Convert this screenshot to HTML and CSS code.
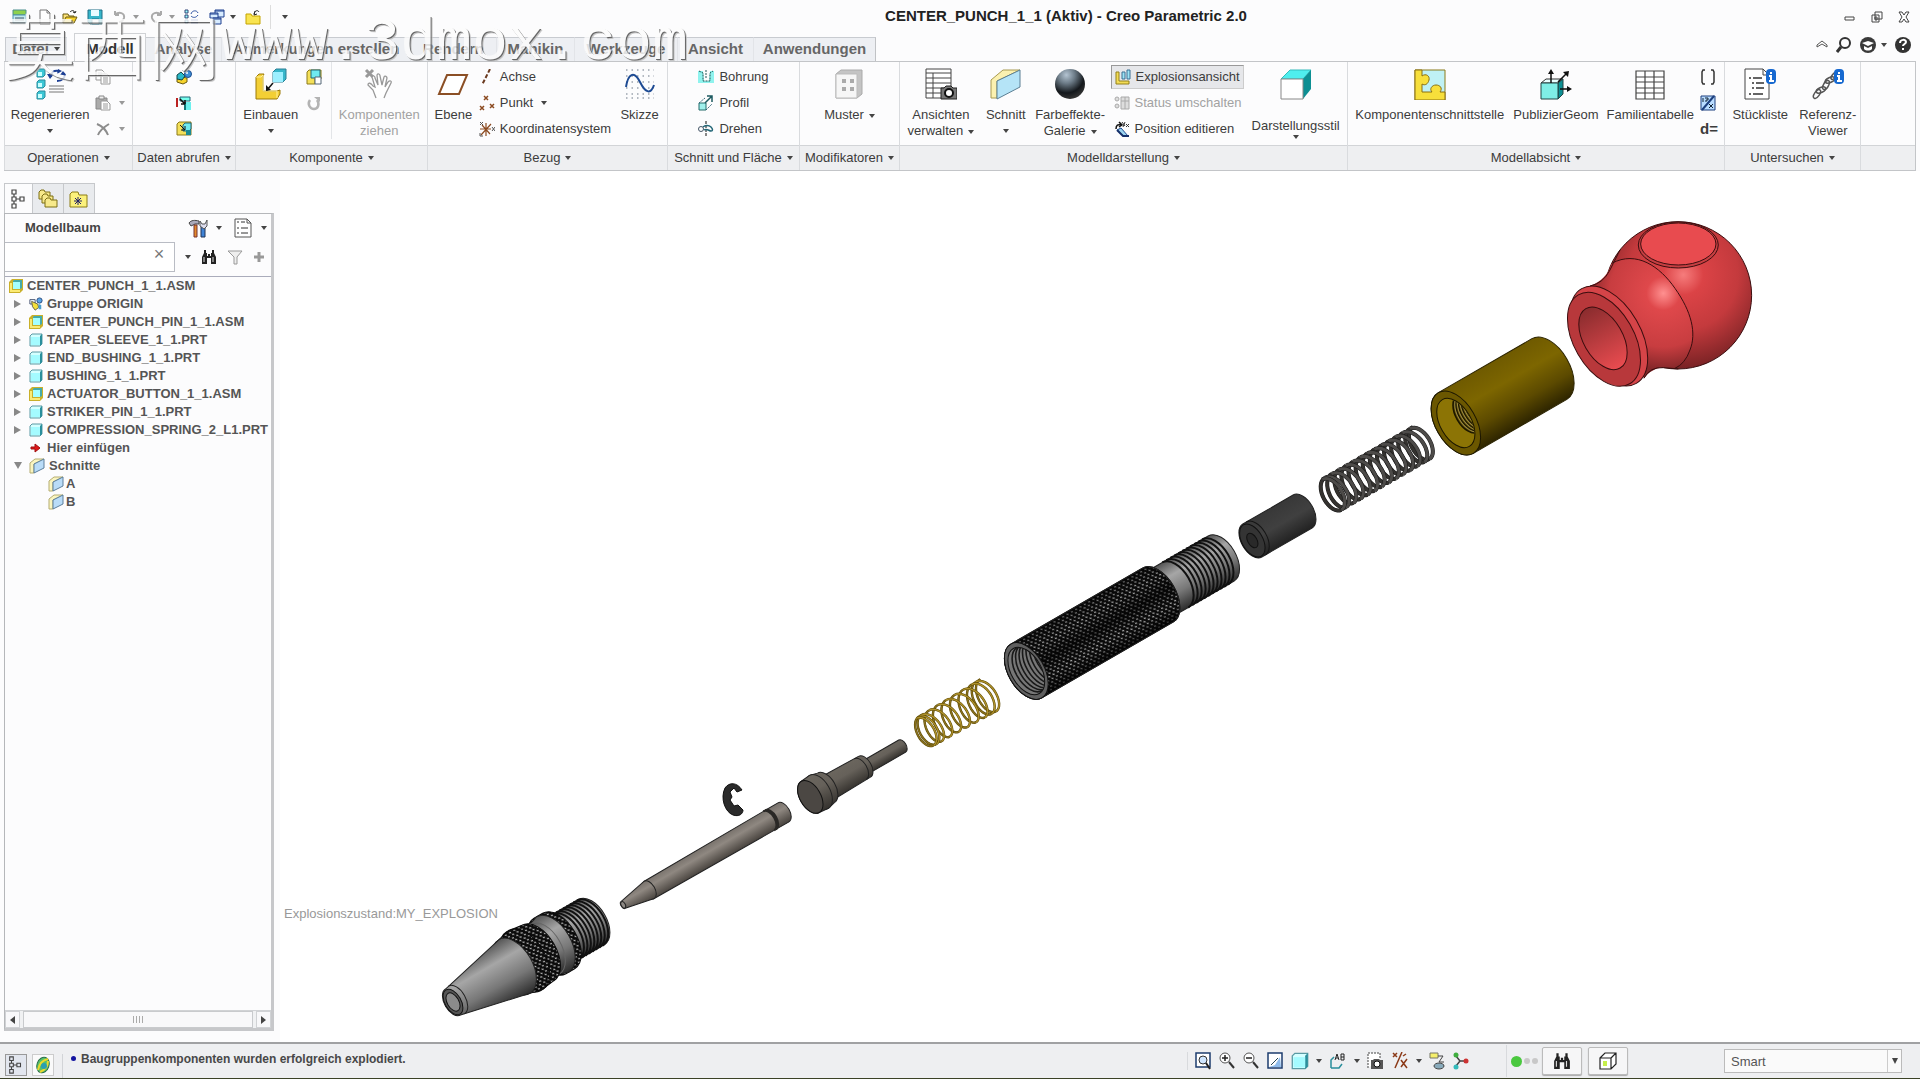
FILE: index.html
```html
<!DOCTYPE html>
<html lang="de">
<head>
<meta charset="utf-8">
<meta name="viewport" content="width=device-width, initial-scale=1">
<title>CENTER_PUNCH_1_1 (Aktiv) - Creo Parametric 2.0</title>
<link rel="stylesheet" href="styles.css">
</head>
<body>
<svg class="sprite" aria-hidden="true">
  <defs>
    <radialGradient id="ball" cx=".38" cy=".2" r=".8"><stop offset="0" stop-color="#b4c4d2"/><stop offset=".35" stop-color="#6d7c88"/><stop offset=".75" stop-color="#14181c"/><stop offset="1" stop-color="#333"/></radialGradient>
  </defs>
  <symbol id="new" viewBox="0 0 16 16"><path d="M1 1h13v5H1z" fill="#8ed14c" stroke="#4b8f8c"/><path d="M1 6h13v8H1z" fill="#bfe9ef" stroke="#4b8fb0"/><path d="M3 9h9M3 11h9" stroke="#456"/></symbol>
  <symbol id="doc" viewBox="0 0 16 16"><path d="M3 1h7l3 3v11H3zM10 1v3h3" fill="#fff" stroke="#777"/></symbol>
  <symbol id="open" viewBox="0 0 16 16"><path d="M1 14V5h5l1 2h5v2" fill="#fbe27a" stroke="#6b5a10"/><path d="M1 14l3-6h11l-3 6z" fill="#f3cf2c" stroke="#6b5a10"/><path d="M8 3c2-2 4-2 5 1m0 0l-2-1m2 1l1-2" fill="none" stroke="#222"/></symbol>
  <symbol id="save" viewBox="0 0 16 16"><path d="M1 1h14v14H3l-2-2z" fill="#36b5c9" stroke="#1f6f86"/><path d="M4 1h8v6H4z" fill="#e8fbff"/><path d="M5 10h7v5H5z" fill="#fff" stroke="#1f6f86"/></symbol>
  <symbol id="undo" viewBox="0 0 16 16"><path d="M3 6c4-4 10-2 9 3-1 3-3 4-5 4M3 6V2m0 4h4" fill="none" stroke="#aaa" stroke-width="2"/></symbol>
  <symbol id="redo" viewBox="0 0 16 16"><path d="M13 6C9 2 3 4 4 9c1 3 3 4 5 4M13 6V2m0 4H9" fill="none" stroke="#aaa" stroke-width="2"/></symbol>
  <symbol id="regen" viewBox="0 0 16 16"><path d="M1 1h3v3H1zM1 6h3v3H1zM1 11h3v3H1z" fill="#9ff" stroke="#347"/><path d="M7 5c1-4 6-4 7-1M14 6c-2 3-5 3-7 1M7 11h7M7 14h7" fill="none" stroke="#2a4fa0"/></symbol>
  <symbol id="wins" viewBox="0 0 16 16"><g fill="#d8ecff" stroke="#1c3f8f"><path d="M6 1h9v7H6z"/><path d="M1 4h8v5H1z"/><path d="M4 9h8v6H4z"/></g><path d="M6 2h9M1 5h8M4 10h8" stroke="#1c3f8f"/></symbol>
  <symbol id="folder" viewBox="0 0 16 16"><path d="M1 15V5h5l1 2h8v8z" fill="#f9e450" stroke="#c4a300"/><path d="M9 5c1-4 4-4 5-2m-4-1l-1 4 3-1" fill="none" stroke="#222"/></symbol>
  <symbol id="regenL" viewBox="0 0 32 32"><g fill="#3cc7d6" stroke="#2a8c9c"><path d="M3 3l2-2h6v6l-2 2H3z"/><path d="M3 14l2-2h6v6l-2 2H3z"/><path d="M3 25l2-2h6v6l-2 2H3z"/></g><path d="M4 4h4v4H4zM4 15h4v4H4zM4 26h4v4H4z" fill="#c8ffff"/><path d="M17 9c0-5 3-7 8-6M30 5c2 5-2 8-7 8" fill="none" stroke="#1d3f94" stroke-width="2"/><path d="M13 6h7l-4 5zM24 1l-1 5 5-3zM26 7h6l-3-4z" fill="#1d3f94"/><path d="M15 18h15M15 21h15M15 24h15" stroke="#777"/></symbol>
  <symbol id="copy" viewBox="0 0 16 16"><g fill="#fff" stroke="#999"><path d="M1 1h6l3 3v7H1z"/><path d="M6 5h6l3 3v7H6z"/></g><path d="M3 4h4M3 6h3M8 9h5M8 11h5M8 13h5" stroke="#999"/></symbol>
  <symbol id="paste" viewBox="0 0 16 16"><path d="M1 3h11v11H1z" fill="#aaa" stroke="#888"/><path d="M4 1h5v3H4z" fill="#eee" stroke="#888"/><path d="M6 6h6l3 3v6H6z" fill="#fff" stroke="#999"/><path d="M8 9h5M8 11h5M8 13h5" stroke="#999"/></symbol>
  <symbol id="del" viewBox="0 0 16 16"><path d="M2 3c5 2 9 6 11 11M14 3C9 6 5 9 3 14" fill="none" stroke="#8c8c8c" stroke-width="2"/></symbol>
  <symbol id="udf" viewBox="0 0 16 16"><path d="M1 10l5-2 5 1v4l-4 2-6-2z" fill="#f5d22b" stroke="#6b5a10"/><path d="M1 6l4-3 4 4-3 4-5-1z" fill="#2bb9c9" stroke="#144"/><circle cx="12" cy="5" r="3.500" fill="#3e8fd6" stroke="#1c4b8c"/><circle cx="11" cy="4" r="1" fill="#fff"/></symbol>
  <symbol id="copygeo" viewBox="0 0 16 16"><path d="M4 2h10v4H4z" fill="#7fe" stroke="#267"/><path d="M1 3v9" stroke="#b22" stroke-width="2"/><path d="M9 7h6v8H9z" fill="#6cf1ee"/><path d="M9 7v8" stroke="#177" stroke-width="2"/><path d="M4 4l5 5m0 0V5m0 4H5" stroke="#111" stroke-width="1.500" fill="none"/></symbol>
  <symbol id="shrink" viewBox="0 0 16 16"><path d="M1 3l2-2h12v13H1z" fill="#f4e05a" stroke="#8c7a18"/><path d="M7 4l2-2h6v6l-2 2H7z" fill="#6feaf0" stroke="#267"/><path d="M10 9h5v5h-5z" fill="#1b8a94"/><path d="M4 4l5 5m0 0V5m0 4H5" stroke="#111" fill="none"/></symbol>
  <symbol id="assemble" viewBox="0 0 32 32"><path d="M1 9l3-3h5l-1 2v15h14l3-1v4l-3 5H1z" fill="#f3cf35" stroke="#9c7a08"/><path d="M1 9h5l2-2v16h14v7" fill="none" stroke="#fff09a"/><path d="M18 4l3-3h10v10l-3 3H18z" fill="#36b7cb" stroke="#2a7f94"/><path d="M18 4h10v10H18z" fill="#9defff"/><path d="M18 15l-6 7" stroke="#111" stroke-width="1.500"/><path d="M11 23v-6l5 5z" fill="#111"/></symbol>
  <symbol id="create" viewBox="0 0 16 16"><path d="M1 3l2-2h12v9H9v5H1z" fill="#f4e05a" stroke="#8c7a18"/><path d="M5 1h9v8H5z" fill="#6feaf0" stroke="#267"/><path d="M9 8h6v7H9z" fill="#fff" stroke="#567"/></symbol>
  <symbol id="repeat" viewBox="0 0 16 16"><path d="M4 5c-3 4 0 9 4 9s6-5 3-9" fill="none" stroke="#b3b3b3" stroke-width="2.500"/><path d="M8 2h6v5z" fill="#b3b3b3"/></symbol>
  <symbol id="drag" viewBox="0 0 32 32"><path d="M3 2l7 7M10 2L3 9" stroke="#999" stroke-width="3"/><path d="M13 30l-3-8-5-5c0-3 3-2 5 1l2 1-3-10c1-2 3-1 3 1l3 7-1-10c1-2 3-1 3 1l2 9 2-8c1-2 3 0 3 1l-2 9 3-5c2-2 4-1 3 1l-5 10-2 5" fill="#fff" stroke="#999" stroke-width="1.300"/></symbol>
  <symbol id="plane" viewBox="0 0 32 32"><path d="M10 7h20L22 26H2z" fill="#fff" stroke="#8b4f25" stroke-width="2"/></symbol>
  <symbol id="axis" viewBox="0 0 16 16"><path d="M11 0L3 16" stroke="#6b3a20" stroke-width="2" stroke-dasharray="4 2"/></symbol>
  <symbol id="point" viewBox="0 0 16 16"><path d="M5 1l4 4M9 1L5 5M1 11l4 4M5 11l-4 4M11 9l4 4M15 9l-4 4" stroke="#8b4a20" stroke-width="1.500"/></symbol>
  <symbol id="csys" viewBox="0 0 16 16"><path d="M1 8h11M7 2v13M2 14L12 3M3 4l8 9" stroke="#8b4a20" stroke-width="1.200"/><path d="M1 1l3 3M4 1L1 4M13 6l3 4M16 6l-3 4M1 12v3h3" stroke="#555" fill="none"/></symbol>
  <symbol id="sketch" viewBox="0 0 32 32"><path d="M2 2h28M2 8h28M2 14h28M2 20h28M2 26h28M2 30h28" stroke="#9aa3ad" stroke-width="1.500" stroke-dasharray="1.500 4"/><path d="M2 19C4 6 10 2 16 14s11 12 14 3" fill="none" stroke="#1d4a93" stroke-width="2"/></symbol>
  <symbol id="hole" viewBox="0 0 16 16"><path d="M0 2h5l1 10h5l1-10h4v12H0z" fill="#8ff3ee"/><path d="M1 2l4 2v8h7V4l3-2M8 1v9" stroke="#255" stroke-dasharray="2 1" fill="none"/></symbol>
  <symbol id="extrude" viewBox="0 0 16 16"><path d="M1 8h7v7H1z" fill="#9ff0ec" stroke="#256b6b"/><path d="M1 8l6-5M8 15l6-6" stroke="#367" stroke-dasharray="2 1"/><path d="M7 8l7-7M9 1h5v6" fill="none" stroke="#1d5a60" stroke-width="1.500"/></symbol>
  <symbol id="revolve" viewBox="0 0 16 16"><path d="M8 0v16" stroke="#111" stroke-dasharray="3 1"/><circle cx="3" cy="8" r="2.500" fill="none" stroke="#456"/><path d="M5 6c2-2 6-2 8 0s2 4 0 4-4-3-7-1" fill="none" stroke="#267" stroke-width="1.500"/></symbol>
  <symbol id="pattern" viewBox="0 0 32 32"><path d="M3 6l5-4h21v24l-5 4H3z" fill="#c4c4c4" stroke="#aaa"/><path d="M3 6h21v24H3z" fill="#f6f6f6" stroke="#bbb"/><path d="M9 13h4M17 13h4M9 21h4M17 21h4" stroke="#aaa" stroke-width="4"/></symbol>
  <symbol id="views" viewBox="0 0 32 32"><path d="M1 1h25v29H1zM1 5h25M8 5v25M1 10h25M1 15h25M1 20h25M1 25h25" fill="#fff" stroke="#444"/><path d="M16 20h3l2-2h5l2 2h4v11H16z" fill="#777" stroke="#222"/><circle cx="24" cy="25" r="4" fill="#fff" stroke="#111" stroke-width="2"/></symbol>
  <symbol id="section" viewBox="0 0 32 32"><path d="M1 12L13 2h17L7 13v17H1z" fill="#fbf1b0" stroke="#a89a50"/><path d="M7 13L30 2v17L7 31z" fill="#b5e4f7" stroke="#5b7f94"/></symbol>
  <symbol id="sphere" viewBox="0 0 32 32"><circle cx="16" cy="16" r="15" fill="url(#ball)"/></symbol>
  <symbol id="explode" viewBox="0 0 16 16"><path d="M1 3h3v9h10v3H1z" fill="#f3dc55" stroke="#93801a"/><path d="M7 3h3v7H7zM12 1h3v9h-3z" fill="#9be4f4" stroke="#3b6f94"/></symbol>
  <symbol id="toggle" viewBox="0 0 16 16"><g fill="#ddd" stroke="#aaa"><circle cx="3" cy="4" r="2"/><circle cx="3" cy="11" r="2"/><path d="M7 2h8v12H7z"/></g><path d="M7 6h8M11 2v12" stroke="#aaa"/></symbol>
  <symbol id="editpos" viewBox="0 0 16 16"><path d="M2 8c0-4 2-5 5-4M5 1l3 3-3 2" fill="none" stroke="#111" stroke-width="1.500"/><path d="M8 1l3 4M11 1l-2 5M12 3l3 3M15 3l-3 3" stroke="#333"/><path d="M3 9l4-2 7 8H9z" fill="#9bd4ef" stroke="#1d4a93"/><path d="M3 9l6 6h6" stroke="#142f6a" stroke-width="2" fill="none"/></symbol>
  <symbol id="style" viewBox="0 0 32 32"><path d="M1 11L10 2h21l-8 9z" fill="#4feeee" stroke="#3bb"/><path d="M23 11l8-9v19l-8 10z" fill="#0d8f93"/><path d="M1 11h22v20H1z" fill="#fff" stroke="#888"/></symbol>
  <symbol id="puzzle" viewBox="0 0 32 32"><path d="M1 2h30v30H1z" fill="#bff1f5" stroke="#8a7a18"/><path d="M1 2h7v6c4-3 8 0 7 4s-4 6-7 4v8h10c-3-3 0-7 4-7s7 3 4 7h5v8H1z" fill="#f7df3b" stroke="#8a6f10"/></symbol>
  <symbol id="publish" viewBox="0 0 32 32"><path d="M1 15l5-4h17l-5 4z" fill="#eaffff" stroke="#333"/><path d="M18 15l5-4v15l-5 5z" fill="#0d8f93" stroke="#244"/><path d="M1 15h17v16H1z" fill="#7feee6" stroke="#244"/><path d="M11 15V3M18 14L27 5M20 21h10" stroke="#111" stroke-width="1.500"/><path d="M8 6l3-5 3 5zM23 4l6-1-1 6zM27 18l5 3-5 3z" fill="#111"/></symbol>
  <symbol id="family" viewBox="0 0 32 32"><path d="M2 3h28v28H2zM2 9h28M2 14h28M2 20h28M2 25h28M11 3v28M20 3v28" fill="#fff" stroke="#444" stroke-width="1.200"/></symbol>
  <symbol id="parens" viewBox="0 0 16 16"><path d="M5 1H3L2 3v10l1 2h2M11 1h2l1 2v10l-1 2h-2" fill="none" stroke="#333" stroke-width="1.500"/></symbol>
  <symbol id="switch" viewBox="0 0 16 16"><path d="M1 1h14v14H1z" fill="#b9dcff" stroke="#1c3f7f"/><path d="M14 1L2 15" stroke="#1c3f7f" stroke-width="2"/><path d="M3 3v4M5 3h3v2H6v2M9 9l4 4M13 9l-4 4" fill="none" stroke="#123"/></symbol>
  <symbol id="bom" viewBox="0 0 32 32"><path d="M1 1h18l6 6v24H1zM19 1v6h6" fill="#fff" stroke="#444"/><path d="M5 10h2M9 10h9M8 15h2M12 15h8M8 20h2M12 20h8M5 26h2M9 26h10" stroke="#333" stroke-width="1.500"/><rect x="22" y="1" width="10" height="15" rx="4" fill="#1769d0"/><path d="M26 5h2M25 8h2v5M25 13h5" stroke="#fff" stroke-width="2" fill="none"/></symbol>
  <symbol id="refview" viewBox="0 0 32 32"><g fill="none" stroke="#555" stroke-width="1.500"><ellipse cx="5" cy="26" rx="5" ry="2.500" transform="rotate(-55 5 26)"/><ellipse cx="9" cy="22" rx="5" ry="2.500" transform="rotate(-25 9 22)"/><ellipse cx="14" cy="17" rx="5" ry="2.500" transform="rotate(-60 14 17)"/><ellipse cx="18" cy="12" rx="5" ry="2.500" transform="rotate(-25 18 12)"/><ellipse cx="22" cy="8" rx="4" ry="2" transform="rotate(-50 22 8)"/></g><rect x="22" y="1" width="10" height="15" rx="4" fill="#1769d0"/><path d="M26 5h2M25 8h2v5M25 13h5" stroke="#fff" stroke-width="2" fill="none"/></symbol>
  <symbol id="min" viewBox="0 0 12 12"><path d="M1 6h9v3H1z" fill="#fff" stroke="#444"/></symbol>
  <symbol id="restore" viewBox="0 0 12 12"><path d="M4 1h7v7H4zM1 4h7v7H1zM4 6h2v3H4z" fill="none" stroke="#444"/></symbol>
  <symbol id="close" viewBox="0 0 12 12"><path d="M1 1h3l2 3 2-3h3L8 6l3 5H8L6 8l-2 3H1l3-5z" fill="#fff" stroke="#444"/></symbol>
  <symbol id="chev" viewBox="0 0 12 12"><path d="M1 6l5-4 5 4v2L6 5 1 8z" fill="#fff" stroke="#555"/></symbol>
  <symbol id="search" viewBox="0 0 16 16"><circle cx="9" cy="6" r="5" fill="none" stroke="#333" stroke-width="2"/><path d="M5 10l-4 5" stroke="#333" stroke-width="3"/></symbol>
  <symbol id="learn" viewBox="0 0 16 16"><circle cx="8" cy="8" r="8" fill="#3a3a3a"/><path d="M2 6l6-2 6 2-6 3zM4 9v3c2 2 6 2 8 0V9l-4 2z" fill="#fff"/></symbol>
  <symbol id="help" viewBox="0 0 16 16"><circle cx="8" cy="8" r="8" fill="#333"/><path d="M5 6c0-4 6-4 6-1 0 2-3 2-3 4M8 11v2" fill="none" stroke="#fff" stroke-width="2"/></symbol>
  <symbol id="treeicon" viewBox="0 0 20 20"><path d="M3 1h4v4H3zM3 8h4v4H3zM3 15h4v4H3zM11 8h4v4h-4zM5 5v3M5 12v3M7 10h4" fill="none" stroke="#444" stroke-width="1.200"/></symbol>
  <symbol id="folders" viewBox="0 0 20 20"><g fill="#f7e98a" stroke="#7c6e14"><path d="M1 10V3l2-2h3l1 2h5v7z"/><path d="M4 14V7l2-2h3l1 2h5v7z"/><path d="M7 18v-7l2-2h3l1 2h6v7z"/></g></symbol>
  <symbol id="favs" viewBox="0 0 20 20"><path d="M1 18V5l2-2h6l1 3h8v12z" fill="#fbf17c" stroke="#8c7c14"/><path d="M9 8v8M5 12h8M6 9l6 6M12 9l-6 6" stroke="#226"/></symbol>
  <symbol id="tools" viewBox="0 0 20 20"><path d="M1 5c2-3 6-3 10-2v3H7L3 8z" fill="#aab" stroke="#444"/><path d="M6 7h3v12H6z" fill="#e58a2a" stroke="#733"/><path d="M13 9h4v10h-4z" fill="#3f83d6" stroke="#235"/><path d="M12 3l2 3h3l2-4v6l-3 3-4-3z" fill="#dde" stroke="#555"/></symbol>
  <symbol id="list" viewBox="0 0 18 20"><path d="M1 1h12l4 4v14H1zM13 1v4h4" fill="#fff" stroke="#555"/><path d="M3 4h2M3 10h2M3 15h2M7 4h4M7 10h7M7 15h7" stroke="#333"/></symbol>
  <symbol id="binoc" viewBox="0 0 16 16"><path d="M3 1h2v3h1v3h1V5h2v2h1V4h1V1h2v3l2 4v7h-5V9H6v6H1V8l2-4z" fill="#222"/><path d="M3 8v5M12 8v5" stroke="#ddd"/></symbol>
  <symbol id="filter" viewBox="0 0 16 16"><path d="M1 2h14l-5 6v7H7V8z" fill="#eee" stroke="#999"/></symbol>
  <symbol id="plus" viewBox="0 0 12 12"><path d="M6 1v10M1 6h10" stroke="#999" stroke-width="3"/></symbol>
  <symbol id="asm" viewBox="0 0 14 14"><path d="M0 3l3-3h11v11l-3 3H0z" fill="#c9b02a"/><path d="M1 4h2v7h8v2H1z" fill="#fbea74"/><path d="M4 2l1-1h8v8l-2 1H4z" fill="#4aa"/><path d="M4 3h7v7H4z" fill="#a4ffff"/></symbol>
  <symbol id="prt" viewBox="0 0 14 14"><path d="M1 3l2-2h10v10l-2 2H1z" fill="#d4ffff" stroke="#5a9aa4"/><path d="M11 3l2-2v10l-2 2z" fill="#2a8f9c"/><path d="M2 4h9v8H2z" fill="#a4fbff"/></symbol>
  <symbol id="cut" viewBox="0 0 16 16"><path d="M1 5l5-4h9L5 6v9H1z" fill="#faf5c0" stroke="#b5ad70"/><path d="M5 6l10-5v9L5 15z" fill="#b9dcf8" stroke="#5c7f9c"/></symbol>
  <symbol id="grp" viewBox="0 0 16 16"><path d="M1 3h6v5H1z" fill="#fff" stroke="#346"/><path d="M3 5l7 3 1 4-4 3-3-4z" fill="#f5e03b" stroke="#554"/><circle cx="12" cy="4" r="3" fill="#5aa5e6" stroke="#247"/><path d="M11 8l3 1v5h-3z" fill="#4a9fd0"/></symbol>
  <symbol id="insert" viewBox="0 0 14 14"><path d="M2 6h4V3l5 4-5 4V8H2z" fill="#e01818" stroke="#a01010"/></symbol>
  <symbol id="browser" viewBox="0 0 16 18"><ellipse cx="8" cy="9" rx="6" ry="8" fill="#55c06a" stroke="#2a6e4a" transform="rotate(20 8 9)"/><path d="M3 14c1-6 5-10 10-11M5 16c5-2 8-6 8-11" stroke="#e9d92c" stroke-width="2" fill="none"/><circle cx="9" cy="10" r="3" fill="#2a9fb0"/></symbol>
  <symbol id="refit" viewBox="0 0 16 18"><path d="M1 1h14v14H1z" fill="#fff" stroke="#1d3d6e" stroke-width="1.500"/><circle cx="8" cy="8" r="4" fill="#cfe6ff" stroke="#333"/><path d="M11 11l4 6" stroke="#222" stroke-width="2"/></symbol>
  <symbol id="zin" viewBox="0 0 16 18"><circle cx="6" cy="6" r="5" fill="#fff" stroke="#555"/><path d="M6 3v6M3 6h6" stroke="#222" stroke-width="1.500"/><path d="M10 10l5 6" stroke="#333" stroke-width="2"/></symbol>
  <symbol id="zout" viewBox="0 0 16 18"><circle cx="6" cy="6" r="5" fill="#fff" stroke="#555"/><path d="M3 6h6" stroke="#222" stroke-width="1.500"/><path d="M10 10l5 6" stroke="#333" stroke-width="2"/></symbol>
  <symbol id="repaint" viewBox="0 0 16 18"><path d="M1 1h14v15H1z" fill="#fff" stroke="#1d3d6e" stroke-width="1.500"/><path d="M2 15l6-2 5-8 1 10z" fill="#8fbcec"/><path d="M4 13l7-7" stroke="#245"/></symbol>
  <symbol id="saved" viewBox="0 0 16 18"><path d="M1 16V8l3-3M1 16h8l3-4" stroke="#2a8f9c" fill="none" stroke-width="1.500"/><path d="M5 8l2-6 2 6M6 6h2M11 2v6h3V5h-3M11 2h3v3" fill="none" stroke="#222"/></symbol>
  <symbol id="vmgr" viewBox="0 0 16 18"><path d="M1 16V1h12v6" fill="#fff" stroke="#444" stroke-dasharray="2 1"/><path d="M4 8h2l1-1h5l1 1h3v9H4z" fill="#555"/><circle cx="10" cy="12" r="3" fill="#fff" stroke="#111"/></symbol>
  <symbol id="datums" viewBox="0 0 16 18"><path d="M1 1l4 4M5 1L1 5M10 0L3 16M9 8l6 8M15 7l-6 8M11 4l3-2" stroke="#8b3a18" stroke-width="1.500"/></symbol>
  <symbol id="anno" viewBox="0 0 16 18"><path d="M1 1h8v5H1z" fill="#f5ef6b" stroke="#776"/><path d="M9 4h5l-4 6h5M6 13h9" stroke="#444" fill="none"/><ellipse cx="10" cy="14" rx="5" ry="3" fill="#8ab" stroke="#444"/></symbol>
  <symbol id="spin" viewBox="0 0 16 18"><path d="M3 4l4 5-4 5M7 9h6" stroke="#444" fill="none" stroke-width="1.500"/><circle cx="3" cy="3" r="2.500" fill="#3fae3f"/><circle cx="3" cy="15" r="2.500" fill="#3bb"/><circle cx="13" cy="9" r="2.500" fill="#c33"/></symbol>
  <symbol id="cube" viewBox="0 0 18 18"><path d="M1 6l5-5h11v11l-5 5H1zM1 6h11v11M12 6l5-5" fill="#fff" stroke="#222" stroke-width="1.200"/><path d="M4 9h4v5H4z" fill="#c6ef4a"/></symbol>
</svg>

<header class="top">
  <div class="titlebar">
    <div class="quick">
      <button aria-label="Neu"><svg class="i16"><use href="#new"/></svg></button>
      <button aria-label="Dokument"><svg class="i16"><use href="#doc"/></svg></button>
      <button aria-label="Öffnen"><svg class="i16"><use href="#open"/></svg></button>
      <button aria-label="Speichern"><svg class="i16"><use href="#save"/></svg></button>
      <button aria-label="Rückgängig" class="off"><svg class="i16"><use href="#undo"/></svg><i class="caret"></i></button>
      <button aria-label="Wiederholen" class="off"><svg class="i16"><use href="#redo"/></svg><i class="caret"></i></button>
      <button aria-label="Regenerieren"><svg class="i16"><use href="#regen"/></svg></button>
      <button aria-label="Fenster"><svg class="i16"><use href="#wins"/></svg><i class="caret"></i></button>
      <button aria-label="Schließen"><svg class="i16"><use href="#folder"/></svg></button>
      <button aria-label="Anpassen" class="custom"><i class="caret"></i></button>
    </div>
    <h1>CENTER_PUNCH_1_1 (Aktiv) - Creo Parametric 2.0</h1>
    <div class="winctl">
      <button aria-label="Minimieren"><svg class="i12"><use href="#min"/></svg></button>
      <button aria-label="Wiederherstellen"><svg class="i12"><use href="#restore"/></svg></button>
      <button aria-label="Fenster schließen"><svg class="i12"><use href="#close"/></svg></button>
    </div>
  </div>
  <div class="tabbar">
    <nav class="tabs">
      <button class="tab file">Datei<i class="caret"></i></button>
      <button class="tab active">Modell</button>
      <button class="tab t76">Analyse</button>
      <button class="tab t189">Anmerkungen erstellen</button>
      <button class="tab t86">Rendern</button>
      <button class="tab t78">Manikin</button>
      <button class="tab t103">Werkzeuge</button>
      <button class="tab t76">Ansicht</button>
      <button class="tab t122">Anwendungen</button>
    </nav>
    <div class="helpers">
      <button aria-label="Minimieren der Leiste"><svg class="i12"><use href="#chev"/></svg></button>
      <button aria-label="Suchen"><svg class="i16"><use href="#search"/></svg></button>
      <button aria-label="Lernen"><svg class="i16"><use href="#learn"/></svg><i class="caret"></i></button>
      <button aria-label="Hilfe"><svg class="i16"><use href="#help"/></svg></button>
    </div>
  </div>
  <div class="ribbon">
    <section class="group">
      <div class="gbody g-op">
        <button class="big"><svg class="i32"><use href="#regenL"/></svg><span>Regenerieren</span><i class="caret"></i></button>
        <div class="col">
          <button class="sm off" aria-label="Kopieren"><svg class="i16"><use href="#copy"/></svg></button>
          <button class="sm off" aria-label="Einfügen"><svg class="i16"><use href="#paste"/></svg><i class="caret"></i></button>
          <button class="sm off" aria-label="Löschen"><svg class="i16"><use href="#del"/></svg><i class="caret"></i></button>
        </div>
      </div>
      <button class="glabel">Operationen<i class="caret"></i></button>
    </section>
    <section class="group">
      <div class="gbody g-mid">
        <div class="col">
          <button class="sm" aria-label="Benutzerdefiniertes KE"><svg class="i16"><use href="#udf"/></svg></button>
          <button class="sm" aria-label="Geometrie kopieren"><svg class="i16"><use href="#copygeo"/></svg></button>
          <button class="sm" aria-label="Schrumpfverpackung"><svg class="i16"><use href="#shrink"/></svg></button>
        </div>
      </div>
      <button class="glabel">Daten abrufen<i class="caret"></i></button>
    </section>
    <section class="group">
      <div class="gbody g-komp">
        <button class="big"><svg class="i32"><use href="#assemble"/></svg><span>Einbauen</span><i class="caret"></i></button>
        <div class="col">
          <button class="sm" aria-label="Erzeugen"><svg class="i16"><use href="#create"/></svg></button>
          <button class="sm off" aria-label="Wiederholen"><svg class="i16"><use href="#repeat"/></svg></button>
        </div>
        <button class="big off split"><svg class="i32"><use href="#drag"/></svg><span>Komponenten<br>ziehen</span></button>
      </div>
      <button class="glabel">Komponente<i class="caret"></i></button>
    </section>
    <section class="group">
      <div class="gbody g-bez">
        <button class="big"><svg class="i32"><use href="#plane"/></svg><span>Ebene</span></button>
        <div class="col">
          <button class="sm"><svg class="i16"><use href="#axis"/></svg>Achse</button>
          <button class="sm"><svg class="i16"><use href="#point"/></svg>Punkt<i class="caret"></i></button>
          <button class="sm"><svg class="i16"><use href="#csys"/></svg>Koordinatensystem</button>
        </div>
        <button class="big"><svg class="i32"><use href="#sketch"/></svg><span>Skizze</span></button>
      </div>
      <button class="glabel">Bezug<i class="caret"></i></button>
    </section>
    <section class="group">
      <div class="gbody g-mid">
        <div class="col">
          <button class="sm"><svg class="i16"><use href="#hole"/></svg>Bohrung</button>
          <button class="sm"><svg class="i16"><use href="#extrude"/></svg>Profil</button>
          <button class="sm"><svg class="i16"><use href="#revolve"/></svg>Drehen</button>
        </div>
      </div>
      <button class="glabel">Schnitt und Fläche<i class="caret"></i></button>
    </section>
    <section class="group">
      <div class="gbody g-mid">
        <button class="big"><svg class="i32"><use href="#pattern"/></svg><span>Muster<i class="caret"></i></span></button>
      </div>
      <button class="glabel">Modifikatoren<i class="caret"></i></button>
    </section>
    <section class="group">
      <div class="gbody g-dar">
        <button class="big"><svg class="i32"><use href="#views"/></svg><span>Ansichten<br>verwalten<i class="caret"></i></span></button>
        <button class="big"><svg class="i32"><use href="#section"/></svg><span>Schnitt</span><i class="caret"></i></button>
        <button class="big"><svg class="i32"><use href="#sphere"/></svg><span>Farbeffekte-<br>Galerie<i class="caret"></i></span></button>
        <div class="col">
          <button class="sm pressed"><svg class="i16"><use href="#explode"/></svg>Explosionsansicht</button>
          <button class="sm off"><svg class="i16"><use href="#toggle"/></svg>Status umschalten</button>
          <button class="sm"><svg class="i16"><use href="#editpos"/></svg>Position editieren</button>
        </div>
        <button class="big low"><svg class="i32"><use href="#style"/></svg><span>Darstellungsstil</span><i class="caret"></i></button>
      </div>
      <button class="glabel">Modelldarstellung<i class="caret"></i></button>
    </section>
    <section class="group">
      <div class="gbody g-abs">
        <button class="big"><svg class="i32"><use href="#puzzle"/></svg><span>Komponentenschnittstelle</span></button>
        <button class="big"><svg class="i32"><use href="#publish"/></svg><span>PublizierGeom</span></button>
        <button class="big"><svg class="i32"><use href="#family"/></svg><span>Familientabelle</span></button>
        <div class="col">
          <button class="sm" aria-label="Parameter"><svg class="i16"><use href="#parens"/></svg></button>
          <button class="sm" aria-label="Bemaßungen wechseln"><svg class="i16"><use href="#switch"/></svg></button>
          <button class="sm rel" aria-label="Beziehungen">d=</button>
        </div>
      </div>
      <button class="glabel">Modellabsicht<i class="caret"></i></button>
    </section>
    <section class="group">
      <div class="gbody g-unt">
        <button class="big"><svg class="i32"><use href="#bom"/></svg><span>Stückliste</span></button>
        <button class="big"><svg class="i32"><use href="#refview"/></svg><span>Referenz-<br>Viewer</span></button>
      </div>
      <button class="glabel">Untersuchen<i class="caret"></i></button>
    </section>
    <section class="group"><div class="gbody"></div><div class="glabel"></div></section>
  </div>
  <div class="watermark" aria-hidden="true"><span class="han">莫西网</span>www.3dmox.com</div>
</header>

<main class="work">
  <aside class="side">
    <div class="sidetabs">
      <button class="active" aria-label="Modellbaum"><svg class="i20"><use href="#treeicon"/></svg></button>
      <button aria-label="Ordner-Browser"><svg class="i20"><use href="#folders"/></svg></button>
      <button aria-label="Favoriten"><svg class="i20"><use href="#favs"/></svg></button>
    </div>
    <div class="panel">
      <div class="phead">
        <h2>Modellbaum</h2>
        <button aria-label="Einstellungen"><svg class="i20"><use href="#tools"/></svg><i class="caret"></i></button>
        <button aria-label="Anzeigen"><svg class="i20"><use href="#list"/></svg><i class="caret"></i></button>
      </div>
      <div class="find">
        <div class="field"><input type="text" aria-label="Suchen im Modellbaum"><button aria-label="Löschen">×</button></div>
        <button aria-label="Suchoptionen"><i class="caret"></i></button>
        <button aria-label="Suchen"><svg class="i16"><use href="#binoc"/></svg></button>
        <button aria-label="Filter"><svg class="i16"><use href="#filter"/></svg></button>
        <button aria-label="Hinzufügen"><svg class="i12"><use href="#plus"/></svg></button>
      </div>
      <ul class="tree">
        <li class="root"><svg class="i14"><use href="#asm"/></svg>CENTER_PUNCH_1_1.ASM</li>
        <li><b class="tw"></b><svg class="i14"><use href="#grp"/></svg>Gruppe ORIGIN</li>
        <li><b class="tw"></b><svg class="i14"><use href="#asm"/></svg>CENTER_PUNCH_PIN_1_1.ASM</li>
        <li><b class="tw"></b><svg class="i14"><use href="#prt"/></svg>TAPER_SLEEVE_1_1.PRT</li>
        <li><b class="tw"></b><svg class="i14"><use href="#prt"/></svg>END_BUSHING_1_1.PRT</li>
        <li><b class="tw"></b><svg class="i14"><use href="#prt"/></svg>BUSHING_1_1.PRT</li>
        <li><b class="tw"></b><svg class="i14"><use href="#asm"/></svg>ACTUATOR_BUTTON_1_1.ASM</li>
        <li><b class="tw"></b><svg class="i14"><use href="#prt"/></svg>STRIKER_PIN_1_1.PRT</li>
        <li><b class="tw"></b><svg class="i14"><use href="#prt"/></svg>COMPRESSION_SPRING_2_L1.PRT</li>
        <li><b class="tw none"></b><svg class="i14"><use href="#insert"/></svg>Hier einfügen</li>
        <li><b class="tw open"></b><svg class="i16"><use href="#cut"/></svg>Schnitte</li>
        <li class="leaf"><svg class="i16"><use href="#cut"/></svg>A</li>
        <li class="leaf"><svg class="i16"><use href="#cut"/></svg>B</li>
      </ul>
      <div class="hscroll"><button aria-label="Nach links"><i class="left"></i></button><div class="thumb"><i></i><i></i><i></i><i></i></div><button aria-label="Nach rechts"><i class="right"></i></button></div>
    </div>
  </aside>
  <div class="canvas">
    <svg id="model" viewBox="280 171 1640 871" preserveAspectRatio="xMinYMin meet" role="img" aria-label="Explosionsansicht der Baugruppe">
      <defs>
        <linearGradient id="steel" x2="0" y2="1"><stop offset="0" stop-color="#555"/><stop offset=".3" stop-color="#a6a6a6"/><stop offset=".65" stop-color="#777"/><stop offset="1" stop-color="#2c2c2c"/></linearGradient>
        <linearGradient id="pin" x2="0" y2="1"><stop offset="0" stop-color="#77716b"/><stop offset=".35" stop-color="#8f8881"/><stop offset="1" stop-color="#47423d"/></linearGradient>
        <linearGradient id="strike" x2="0" y2="1"><stop offset="0" stop-color="#6b665e"/><stop offset=".4" stop-color="#66615a"/><stop offset="1" stop-color="#35322e"/></linearGradient>
        <linearGradient id="plug" x2="0" y2="1"><stop offset="0" stop-color="#383838"/><stop offset=".5" stop-color="#404040"/><stop offset="1" stop-color="#222"/></linearGradient>
        <linearGradient id="gold" x2="0" y2="1"><stop offset="0" stop-color="#6f5a00"/><stop offset=".35" stop-color="#7d6600"/><stop offset=".7" stop-color="#5c4a00"/><stop offset="1" stop-color="#2e2500"/></linearGradient>
        <linearGradient id="knurlShade" x2="0" y2="1"><stop offset="0" stop-color="#000" stop-opacity=".5"/><stop offset=".25" stop-color="#000" stop-opacity=".05"/><stop offset=".5" stop-color="#000" stop-opacity=".6"/><stop offset=".75" stop-color="#000" stop-opacity="0"/><stop offset="1" stop-color="#000" stop-opacity=".8"/></linearGradient>
        <pattern id="knurl" width="5" height="6" patternUnits="userSpaceOnUse"><path d="M0 0h5v6H0z" fill="#0a0a0a"/><path d="M0 1l2 1M3 4l2 1" stroke="#c4c4c4" stroke-width="1.200"/></pattern>
        <radialGradient id="red" gradientUnits="userSpaceOnUse" cx="790" cy="225" r="300"><stop offset="0" stop-color="#f67c7c"/><stop offset=".2" stop-color="#db4346"/><stop offset=".55" stop-color="#c43a3d"/><stop offset="1" stop-color="#6c1e20"/></radialGradient>
        <radialGradient id="redNeck" gradientUnits="userSpaceOnUse" cx="730" cy="280" r="230"><stop offset="0" stop-color="#ff9090"/><stop offset=".22" stop-color="#df484b"/><stop offset=".7" stop-color="#c83d40"/><stop offset="1" stop-color="#842729"/></radialGradient>
        <linearGradient id="redHole" x2="0" y2="1"><stop offset="0" stop-color="#8a2c2e"/><stop offset="1" stop-color="#ea4c50"/></linearGradient>
        <clipPath id="sleeveBore"><ellipse cx="1158" cy="0" rx="15" ry="26"/></clipPath>
        <clipPath id="handleBore"><ellipse cx="662" cy="0" rx="15" ry="26"/></clipPath>
      </defs>
      <g id="axial" transform="translate(453 1002) rotate(-30)"></g>
      <path d="M742 790c-5-8-13-8-17-2-5 10 0 24 8 27 6 2 10-1 10-5l-5-5-4 1-4-6 2-3-2-5 4-4 3 4z" fill="#2b2b2b" stroke="#111"/>
      <g transform="translate(1420 200) scale(.3333)" stroke="#3a0d0e" stroke-width="3">
        <circle cx="774" cy="286" r="221" fill="url(#red)"/>
        <path d="M510 258Q560 240 575 190Q620 160 690 190C770 240 825 340 817 420Q810 480 765 503L720 503Q690 510 672 535Z" fill="url(#redNeck)" stroke="none"/>
        <path d="M510 258Q550 250 570 210T600 150M575 190C650 150 720 200 765 265C815 335 830 400 810 450Q795 492 765 505M672 535Q690 500 730 503L775 507" fill="none"/>
        <ellipse cx="775" cy="135" rx="120" ry="69" fill="#c63f42"/><ellipse cx="775" cy="132" rx="113" ry="63" fill="#e84b4f"/>
        <ellipse cx="567" cy="408" rx="95" ry="164" transform="rotate(-30 567 408)" fill="#d54448"/>
        <ellipse cx="552" cy="418" rx="90" ry="154" transform="rotate(-30 552 418)" fill="#b8383b"/>
        <ellipse cx="549" cy="415" rx="59" ry="103" transform="rotate(-30 549 415)" fill="url(#redHole)"/>
      </g>
      <text x="284" y="918" class="state">Explosionszustand:MY_EXPLOSION</text>
    </svg>
  </div>
</main>

<footer class="status">
  <div class="modes">
    <button class="on" aria-label="Navigator"><svg class="i18"><use href="#treeicon"/></svg></button>
    <button aria-label="Browser"><svg class="i18"><use href="#browser"/></svg></button>
  </div>
  <p class="msg">Baugruppenkomponenten wurden erfolgreich explodiert.</p>
  <div class="viewbar">
    <button aria-label="Neu einpassen"><svg class="i18"><use href="#refit"/></svg></button>
    <button aria-label="Vergrößern"><svg class="i18"><use href="#zin"/></svg></button>
    <button aria-label="Verkleinern"><svg class="i18"><use href="#zout"/></svg></button>
    <button aria-label="Neuzeichnen"><svg class="i18"><use href="#repaint"/></svg></button>
    <button class="dd" aria-label="Darstellungsstil"><svg class="i18"><use href="#prt"/></svg><i class="caret"></i></button>
    <button class="dd" aria-label="Gespeicherte Orientierungen"><svg class="i18"><use href="#saved"/></svg><i class="caret"></i></button>
    <button aria-label="Ansichtsmanager"><svg class="i18"><use href="#vmgr"/></svg></button>
    <button class="dd" aria-label="Bezugsdarstellung"><svg class="i18"><use href="#datums"/></svg><i class="caret"></i></button>
    <button aria-label="Anmerkungsdarstellung"><svg class="i18"><use href="#anno"/></svg></button>
    <button aria-label="Drehzentrum"><svg class="i18"><use href="#spin"/></svg></button>
  </div>
  <div class="lights"><i class="go"></i><i></i><i></i></div>
  <button class="raised" aria-label="Suchen"><svg class="i18"><use href="#binoc"/></svg></button>
  <button class="raised" aria-label="3D-Boxauswahl"><svg class="i18"><use href="#cube"/></svg></button>
  <div class="pick"><select aria-label="Auswahlfilter"><option>Smart</option></select></div>
</footer>
<script src="model.js"></script>
</body>
</html>
```
FILE: styles.css
```css
* { box-sizing: border-box; }
body { margin: 0; min-height: 100vh; display: flex; flex-direction: column; background: #fcfcfd; color: #3c3c3c; font: 13px/16px "Liberation Sans", Arial, sans-serif; overflow-x: hidden; border-bottom: 1px solid #3b4226; }
button { font: inherit; color: inherit; background: none; border: 0; padding: 0; margin: 0; display: inline-flex; align-items: center; justify-content: center; }
h1, h2, p, ul { margin: 0; padding: 0; }
svg { display: block; flex: none; }
.sprite { position: absolute; width: 0; height: 0; }
.i12 { width: 12px; height: 12px; }
.i14 { width: 14px; height: 14px; }
.i16 { width: 16px; height: 16px; }
.i18 { width: 18px; height: 18px; }
.i20 { width: 20px; height: 20px; }
.i32 { width: 32px; height: 32px; }
.caret { display: inline-block; flex: none; width: 0; height: 0; border: 3px solid transparent; border-top: 4px solid #444; border-bottom: 0; margin-left: 5px; vertical-align: middle; }
.off { color: #a2a2a2; }
.off .caret { border-top-color: #999; }

.top { position: relative; }
.titlebar { height: 33px; display: grid; grid-template-columns: 1fr auto 1fr; align-items: center; padding: 0 10px 0 12px; }
.titlebar h1 { font-size: 15px; line-height: 20px; color: #222; padding: 0 0 2px 210px; }
.quick { display: flex; align-items: center; gap: 9px; width: 0; }
.custom { border-left: 1px solid #ddd; height: 24px; padding-left: 6px; }
.winctl { display: flex; gap: 15px; justify-content: flex-end; }
.tabbar { height: 28px; display: flex; justify-content: space-between; align-items: flex-end; padding: 0 9px 0 5px; }
.tabs { display: flex; align-items: flex-end; }
.tab { height: 24px; padding-bottom: 2px; background: #edeff3; border-top: 1px solid #c8cbd0; font-size: 15px; font-weight: bold; color: #666; white-space: nowrap; border-right: 1px solid #e2e4e8; }
.tab:last-child { border-right-color: #c0c2c5; }
.tab.file { width: 62px; margin-right: 7px; border-left: 1px solid #c8cbd0; }
.tab.active { width: 72px; height: 28px; padding-top: 4px; background: #fcfcfd; color: #333; border: 1px solid #d0d2d5; border-bottom: 0; }
.t76 { width: 76px; }
.t78 { width: 78px; }
.t86 { width: 86px; }
.t103 { width: 103px; }
.t122 { width: 122px; }
.t189 { width: 189px; }
.helpers { display: flex; align-items: center; gap: 8px; height: 28px; padding-bottom: 5px; }

.ribbon { margin: 0 4px 0 4px; display: grid; grid-template-columns: 128fr 103fr 192fr 240fr 132fr 100fr 448fr 377fr 136fr 55fr; border: 1px solid #c3c5c8; border-width: 1px 1px 1px 0; }
.group { min-width: 0; display: flex; flex-direction: column; border-left: 1px solid #d9dbde; }
.gbody { height: 83px; display: grid; align-items: start; }
.glabel { height: 25px; background: #eeeff1; border-top: 1px solid #d2d4d7; white-space: nowrap; }
.big { display: flex; flex-direction: column; align-items: center; padding-top: 6px; width: 100%; text-align: center; white-space: nowrap; }
.big span { margin-top: 7px; }
.big > .caret { margin: 6px 0 0; }
.big.low span { margin-top: 18px; }
.big.low > .caret { margin-top: 1px; }
.split { border-left: 1px solid #e3e5e8; }
.col { display: flex; flex-direction: column; align-items: flex-start; gap: 2px; padding-top: 3px; }
.sm { height: 24px; gap: 5px; white-space: nowrap; }
.sm .caret { margin-left: 3px; }
.pressed { background: #e6e7ea; border: 1px solid #aaa; border-color: #999 #ccc #ccc #999; }
.rel { font-weight: bold; font-size: 15px; }
.g-op { grid-template-columns: 91fr 37fr; }
.g-mid { justify-content: center; }
.g-komp { grid-template-columns: 70fr 25fr 97fr; }
.g-bez { grid-template-columns: 51fr 134fr 55fr; }
.g-dar { grid-template-columns: 82fr 48fr 81fr 134fr 103fr; }
.g-dar .sm { padding: 0 3px; }
.g-abs { grid-template-columns: 164fr 89fr 100fr 24fr; }
.g-unt { grid-template-columns: 70fr 64fr; }
.gbody > * { min-width: 0; }

/* Embossed lettering laid over the toolbar */
.watermark { position: absolute; left: 4px; top: 0; z-index: 5; display: flex; align-items: center; height: 86px; font: 60px/86px "Liberation Mono", monospace; color: #fcfcfc; text-shadow: 1px 1px 0 #444, 2px 2px 0 #bbb; opacity: .8; pointer-events: none; white-space: nowrap; }
.han { font: 300 72px/86px "Noto Sans CJK SC", sans-serif; }

.work { flex: 1; display: flex; min-height: 0; }
.side { width: 270px; margin: 12px 6px 11px 4px; display: flex; flex-direction: column; }
.sidetabs { display: flex; height: 30px; }
.sidetabs button { width: 31px; background: #e9ebee; border: 1px solid #c6c8cb; border-left-width: 0; border-bottom: 0; }
.sidetabs .active { width: 29px; background: #fcfcfd; border-left-width: 1px; }
.panel { flex: 1; display: flex; flex-direction: column; border: 1px solid #b5b7ba; border-right: 3px solid #c6c7ca; border-bottom: 3px solid #c6c7ca; }
.phead { display: flex; align-items: center; height: 28px; padding: 0 4px 0 20px; gap: 11px; }
.phead .caret { margin-left: 8px; }
.phead h2 { flex: 1; font-size: 13px; color: #444; }
.find { display: flex; align-items: center; justify-content: space-between; height: 30px; padding-right: 6px; }
.find .caret { margin: 0; }
.field { width: 170px; height: 30px; display: flex; border: 1px solid #b9bcc4; border-left: 0; background: #fff; }
.field input { flex: 1; min-width: 0; border: 0; background: none; outline: 0; font: inherit; }
.field button { width: 30px; font-size: 18px; color: #777; align-items: flex-start; padding-top: 3px; }
.tree { flex: 1; margin-top: 4px; border-top: 1px solid #aaacbb; list-style: none; font-weight: bold; color: #555; }
.tree li { height: 18px; display: flex; align-items: center; gap: 4px; padding-left: 9px; white-space: nowrap; }
.tree .root { padding-left: 4px; }
.tree .leaf { padding-left: 43px; gap: 2px; }
.tw { width: 8px; height: 8px; margin-right: 3px; border: 4px solid transparent; border-left: 7px solid #888; border-right: 0; }
.tw.none { border-color: transparent; }
.tw.open { border: 4px solid transparent; border-top: 7px solid #888; border-bottom: 0; }
.hscroll { display: flex; height: 18px; gap: 3px; border-top: 1px solid #d0d2d5; background: #f0f1f3; }
.hscroll button { width: 15px; background: #f8f8fa; border: 1px solid #d0d2d5; }
.left, .right { border: 4px solid transparent; border-right: 5px solid #444; border-left: 0; }
.right { border-right: 0; border-left: 5px solid #444; }
.thumb { flex: 1; display: flex; gap: 2px; align-items: center; justify-content: center; background: #f8f8fa; border: 1px solid #c8cacd; }
.thumb i { width: 1px; height: 7px; background: #aaa; }
.canvas { flex: 1; min-width: 0; background: #fff; }
#model { width: 100%; height: auto; }
.state { font: 13px "Liberation Sans", Arial, sans-serif; fill: #999; }

.status { height: 36px; display: flex; align-items: center; background: #eeeff1; border-top: 2px solid #a0a1a3; padding: 0 18px 0 5px; }
.modes { display: flex; gap: 5px; align-self: flex-end; padding: 0 8px 2px 0; border-right: 1px solid #d2d4d7; }
.modes button { width: 22px; height: 22px; border: 1px solid #ccc; background: #fafafa; }
.modes .on { background: #e2e6ee; border-color: #999; }
.msg { flex: 1; font-size: 12px; font-weight: bold; color: #484848; padding: 0 0 4px 8px; white-space: nowrap; }
.msg::before { content: ""; display: inline-block; width: 5px; height: 5px; border-radius: 50%; background: #1414a0; margin: 0 5px 3px 0; vertical-align: middle; }
.viewbar { display: flex; gap: 6px; align-items: center; border-left: 1px solid #d8dadd; padding-left: 6px; margin-right: 36px; }
.viewbar .dd { width: 32px; }
.viewbar .caret { margin-left: 7px; }
.lights { display: flex; gap: 2px; align-items: center; border-left: 1px solid #d8dadd; padding: 0 4px; height: 32px; }
.lights i { width: 6px; height: 6px; border-radius: 50%; background: #c8c8c8; }
.lights .go { width: 11px; height: 11px; background: #4ac83f; }
.raised { width: 40px; height: 28px; border: 1px solid #bbb; border-radius: 2px; background: #f6f6f7; box-shadow: 0 1px 1px #aaa; margin-right: 6px; }
.pick { position: relative; width: 178px; margin-left: 90px; }
.pick select { appearance: none; width: 100%; height: 24px; border: 1px solid #bbb; border-radius: 0; background: #fafafa; padding: 0 6px; font: 13px "Liberation Sans", Arial, sans-serif; color: #555; }
.pick::after { content: ""; position: absolute; right: 4px; top: 9px; border: 3px solid transparent; border-top: 6px solid #444; border-bottom: 0; pointer-events: none; }
.pick::before { content: ""; position: absolute; right: 14px; top: 1px; height: 22px; border-left: 1px solid #ccc; pointer-events: none; }
```
FILE: model.js
```js
// Exploded parts on one isometric axis: u runs along the axis, r is the radius,
// and every circle appears as an ellipse K times as deep as it is high.
const K = 0.577;
const parts = [];
const add = (s) => parts.push(s);

function ring(u, r, fill, stroke = '#111', w = 1, v = 0) {
  add(`<ellipse cx="${u}" cy="${v}" rx="${r * K}" ry="${r}" fill="${fill}" stroke="${stroke}" stroke-width="${w}"/>`);
}
function body(u0, r0, u1, r1, fill, v = 0, stroke = '#222') {
  add(`<path d="M${u0} ${v - r0}L${u1} ${v - r1}A${r1 * K} ${r1} 0 0 1 ${u1} ${v + r1}L${u0} ${v + r0}A${r0 * K} ${r0} 0 0 1 ${u0} ${v - r0}Z" fill="${fill}" stroke="${stroke}"/>`);
}
function arcs(u0, u1, step, r, color, w, v = 0) {
  let d = '';
  for (let u = u0; u <= u1; u += step) d += `M${u} ${v - r}A${r * K} ${r} 0 0 1 ${u} ${v + r}`;
  add(`<path d="${d}" fill="none" stroke="${color}" stroke-width="${w}"/>`);
}
// Helix through the given turn positions; the far halves are drawn before the near ones
function coil(turns, r0, r1, near, far, edge, w, v = 0) {
  const n = turns.length - 1;
  const at = (t) => {
    const i = Math.min(n - 1, Math.floor(t));
    const u = turns[i] + (turns[i + 1] - turns[i]) * (t - i);
    const r = r0 + (r1 - r0) * t / n;
    const a = t * 2 * Math.PI - Math.PI / 2;
    return `${(u + K * r * Math.cos(a)).toFixed(2)} ${(v + r * Math.sin(a)).toFixed(2)}`;
  };
  const half = (t0, color) => {
    const pts = [];
    for (let s = 0; s <= 16; s++) pts.push(at(Math.min(n, t0 + s / 32)));
    const d = 'M' + pts.join('L');
    add(`<path d="${d}" fill="none" stroke="${edge}" stroke-width="${w + 1}"/><path d="${d}" fill="none" stroke="${color}" stroke-width="${w}"/>`);
  };
  for (let i = n - 1; i >= 0; i--) half(i + 0.5, far);
  for (let i = n - 1; i >= 0; i--) half(i, near);
}

// Gold sleeve
body(1158, 35, 1266, 35, 'url(#gold)', 0, '#2b2300');
ring(1158, 35, '#6b5700', '#1c1700');
ring(1158, 27, '#8c7405', '#1c1700');
add('<g clip-path="url(#sleeveBore)">');
for (let i = 0; i < 5; i++) ring(1173 + i * 3, 21, i ? 'none' : '#5e4d00', '#1c1700', 1.6, -2);
for (let i = 0; i < 4; i++) ring(1175 + i * 3, 21, 'none', '#9c8a45', 1, -2);
add('</g>');

// Steel spring
const turns = [1014, 1017];
for (let i = 1; i < 13; i++) turns.push(1017 + i * 8.2);
turns.push(1119);
coil(turns, 18, 18, '#4d4b49', '#34322f', '#1a1a1a', 3);

// Plug
body(923, 19, 981, 19, 'url(#plug)');
arcs(927, 927, 1, 19, '#151515', 1);
ring(923, 18, '#343434');
ring(923, 8, '#292929');

// Knurled handle
body(812, 26, 887, 26, 'url(#steel)');
arcs(834, 884, 4.6, 26, '#111', 2);
body(662, 31, 814, 31, 'url(#knurl)', 0, '#0a0a0a');
body(662, 31, 814, 31, 'url(#knurlShade)');
ring(662, 31, '#5f5f5f');
ring(662, 26, '#767676');
add('<g clip-path="url(#handleBore)">');
for (let i = 0; i < 8; i++) ring(694 - i * 4, 25, 'none', '#191919', 1.6);
add('</g>');

// Brass spring
coil([543, 546, 549, 558, 568, 578, 588, 598, 608, 613, 618], 16, 18, '#b0922c', '#8a7220', '#584600', 1.4, 2);

// Striker
body(474, 7, 517, 7, 'url(#strike)', 3);
body(428, 13, 474, 12, 'url(#strike)', 2);
arcs(469, 469, 1, 12, '#222', 1, 2);
body(422, 19, 430, 17, 'url(#strike)', 1);
body(412, 18, 422, 19, 'url(#strike)', 1);
ring(412, 18, '#4b4743', '#111', 1, 1);

// Pin
body(226, 10, 381, 11, 'url(#pin)', 1);
arcs(364, 366, 2, 11, '#2a2826', 2, 1);
body(196, 4, 226, 10, 'url(#pin)', 1);
ring(196, 3.5, '#8d8883', '#222', 1, 1);

// Taper sleeve
body(124, 26, 160, 26, 'url(#steel)');
arcs(130, 158, 4, 26, '#111', 2);
body(112, 32, 122, 32, 'url(#knurl)', 0, '#0a0a0a');
body(106, 29, 115, 32, 'url(#steel)');
body(92, 25, 106, 29, 'url(#steel)', 0, '#666');
body(82, 34, 98, 32, 'url(#knurl)', 0, '#0a0a0a');
body(71, 31, 84, 34, 'url(#knurl)', 0, '#0a0a0a');
body(0, 15, 71, 31, 'url(#steel)');
arcs(4, 4, 1, 16, '#222', 1);
ring(0, 14, '#555');
ring(0, 10, '#8b8b8b');

document.getElementById('axial').innerHTML = parts.join('');
```
